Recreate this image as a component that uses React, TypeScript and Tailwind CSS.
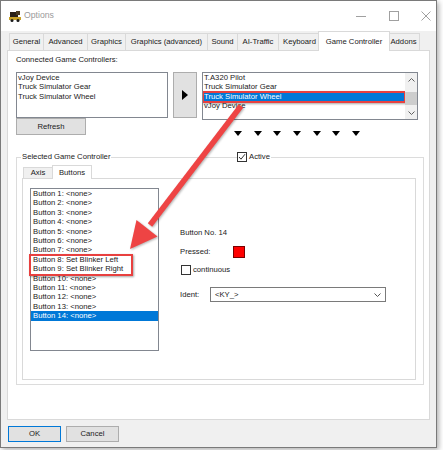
import React from 'react';

// Top level tab strip of the Options window
const topTabs = [
  { label: 'General', cls: 'w-[35px]' },
  { label: 'Advanced', cls: 'w-[45px] -ml-px' },
  { label: 'Graphics', cls: 'w-[39px] -ml-px' },
  { label: 'Graphics (advanced)', cls: 'w-[83px] -ml-px' },
  { label: 'Sound', cls: 'w-[31px] -ml-px' },
  { label: 'AI-Traffic', cls: 'w-[42px] -ml-px' },
  { label: 'Keyboard', cls: 'w-[43px] -ml-px' },
  { label: 'Game Controller', cls: 'w-[72px] -ml-[3px] -mr-[3px]', active: true },
  { label: 'Addons', cls: 'w-[33px]' },
];

const buttonRows = [
  'Button 1: <none>',
  'Button 2: <none>',
  'Button 3: <none>',
  'Button 4: <none>',
  'Button 5: <none>',
  'Button 6: <none>',
  'Button 7: <none>',
];

const buttonRowsAfter = [
  'Button 10: <none>',
  'Button 11: <none>',
  'Button 12: <none>',
  'Button 13: <none>',
];

const ChevronUp = () => (
  <svg width="7" height="4" viewBox="0 0 7 4">
    <path d="M0.5 3.5 L3.5 0.5 L6.5 3.5" fill="none" stroke="#606060" strokeWidth="1" />
  </svg>
);

const ChevronDown = ({ color = '#606060' }: { color?: string }) => (
  <svg width="7" height="4" viewBox="0 0 7 4">
    <path d="M0.5 0.5 L3.5 3.5 L6.5 0.5" fill="none" stroke={color} strokeWidth="1" />
  </svg>
);

const DownTriangle = () => (
  <svg width="8" height="5" viewBox="0 0 8 5">
    <path d="M0 0 H8 L4 5 Z" fill="#000" />
  </svg>
);

const App = () => {
  return (
    <div className="relative w-[443px] h-[450px] bg-white overflow-hidden font-['Liberation_Sans',Arial,sans-serif] text-[7.7px] text-[#1a1a1a]">
      {/* Window */}
      <div className="w-[437px] h-[448px] border border-[#7a7a7a] bg-[#f0f0f0] shadow-[2px_2px_5px_rgba(0,0,0,0.3)] flex flex-col">
        {/* Title bar */}
        <div className="h-[30px] bg-white flex items-center">
          <svg className="ml-[8px]" width="12" height="12" viewBox="0 0 12 12">
            <rect x="1" y="2" width="8" height="5" fill="#2b2118" />
            <rect x="7" y="1" width="4" height="4" fill="#4a3a22" />
            <rect x="0" y="7" width="12" height="3" fill="#c9a227" />
            <circle cx="3" cy="10.5" r="1.5" fill="#1a1a1a" />
            <circle cx="9" cy="10.5" r="1.5" fill="#1a1a1a" />
          </svg>
          <span className="ml-[3px] text-[8.7px] text-[#9a9a9a]">Options</span>
          <div className="ml-auto pr-[5px] flex items-center">
            <svg width="10" height="10" viewBox="0 0 10 10">
              <path d="M0 5.5 H10" stroke="#a0a0a0" strokeWidth="1" />
            </svg>
            <svg className="ml-[23px]" width="10" height="10" viewBox="0 0 10 10">
              <rect x="0.5" y="0.5" width="9" height="9" fill="none" stroke="#a0a0a0" strokeWidth="1" />
            </svg>
            <svg className="ml-[22px]" width="10" height="10" viewBox="0 0 10 10">
              <path d="M0.5 0.5 L9.5 9.5 M9.5 0.5 L0.5 9.5" stroke="#a0a0a0" strokeWidth="1" />
            </svg>
          </div>
        </div>

        {/* Tab strip */}
        <div className="flex items-end pl-[8px] h-[19px]">
          {topTabs.map((t) =>
            t.active ? (
              <div
                key={t.label}
                className={`${t.cls} h-[20px] -mb-px relative z-10 bg-white border border-b-0 border-[#d9d9d9] flex items-center justify-center leading-none`}
              >
                {t.label}
              </div>
            ) : (
              <div
                key={t.label}
                className={`${t.cls} h-[17px] bg-[#f0f0f0] border border-b-0 border-[#d9d9d9] flex items-center justify-center leading-none`}
              >
                {t.label}
              </div>
            )
          )}
        </div>

        {/* Tab page */}
        <div className="ml-[6px] w-[423px] h-[370px] border border-[#d9d9d9] bg-white">
          <div className="pl-[8px] pt-[4px] leading-[10px]">Connected Game Controllers:</div>

          <div className="flex mt-[7px] pl-[8px]">
            {/* Left list + refresh */}
            <div className="flex flex-col">
              <div className="w-[152px] h-[46px] border border-[#828790] bg-white pl-[1px] leading-[9.4px]">
                <div>vJoy Device</div>
                <div>Truck Simulator Gear</div>
                <div>Truck Simulator Wheel</div>
              </div>
              <div className="w-[70px] h-[17px] border border-[#adadad] bg-[#e1e1e1] flex items-center justify-center">
                Refresh
              </div>
            </div>

            {/* Add button */}
            <div className="ml-[5px] w-[24px] h-[46px] border border-[#adadad] bg-[#e1e1e1] flex items-center justify-center">
              <svg width="6" height="10" viewBox="0 0 6 10">
                <path d="M0 0 L6 5 L0 10 Z" fill="#000" />
              </svg>
            </div>

            {/* Right list */}
            <div className="ml-[5px] flex flex-col">
              <div className="w-[216px] h-[48px] border border-[#828790] bg-white flex">
                <div className="flex-1 leading-[9.4px] overflow-hidden">
                  <div className="pl-[1px]">T.A320 Pilot</div>
                  <div className="pl-[1px]">Truck Simulator Gear</div>
                  <div className="relative">
                    <div className="pl-[1px] bg-[#0078d7] text-white">Truck Simulator Wheel</div>
                    <span className="absolute -left-px -right-px -top-px -bottom-[2px] border-2 border-[#e8403f] shadow-[1px_1px_2px_rgba(0,0,0,0.35)]" />
                  </div>
                  <div className="pl-[1px]">vJoy Device</div>
                </div>
                <div className="w-[12px] bg-[#f0f0f0] flex flex-col">
                  <div className="h-[13px] flex items-center justify-center">
                    <ChevronUp />
                  </div>
                  <div className="flex-1">
                    <div className="mt-[6px] h-[13px] bg-[#cdcdcd]" />
                  </div>
                  <div className="h-[13px] flex items-center justify-center">
                    <ChevronDown />
                  </div>
                </div>
              </div>
              <div className="mt-[11px] pl-[32px] flex gap-[11.7px]">
                {[0, 1, 2, 3, 4, 5, 6].map((i) => (
                  <DownTriangle key={i} />
                ))}
              </div>
            </div>
          </div>

          {/* Selected Game Controller group */}
          <div className="relative mt-[21px] ml-[8px] w-[408px] h-[228px] border border-[#dcdcdc] pt-[7px] pl-[5px]">
            <span className="absolute left-[4px] -top-[6px] bg-white px-[1px] leading-[10px]">Selected Game Controller</span>
            <span className="absolute left-[220px] -top-[6px] bg-white flex items-center leading-[10px] pr-[1px]">
              <span className="w-[10px] h-[10px] border border-[#333] bg-white flex items-center justify-center">
                <svg width="8" height="8" viewBox="0 0 8 8">
                  <path d="M1 4 L3 6.2 L7 1.2" fill="none" stroke="#333" strokeWidth="1" />
                </svg>
              </span>
              <span className="ml-[2px]">Active</span>
            </span>

            <div className="flex items-end pl-[1px] h-[13px]">
              <div className="w-[30px] h-[11px] bg-[#f0f0f0] border border-b-0 border-[#d9d9d9] flex items-center justify-center leading-none">
                Axis
              </div>
              <div className="w-[40px] h-[14px] -ml-px -mb-px relative z-10 bg-white border border-b-0 border-[#d9d9d9] flex items-center justify-center leading-none">
                Buttons
              </div>
            </div>

            <div className="w-[394px] h-[202px] border border-[#d9d9d9] bg-white flex">
              {/* Buttons list */}
              <div className="ml-[7px] mt-[9px] w-[129px] h-[163px] border border-[#828790] bg-white leading-[9.4px]">
                {buttonRows.map((r) => (
                  <div key={r} className="pl-[2px]">{r}</div>
                ))}
                <div className="relative">
                  <div className="pl-[2px]">Button 8: Set Blinker Left</div>
                  <div className="pl-[2px]">Button 9: Set Blinker Right</div>
                  <span className="absolute -left-[2px] -top-px w-[104px] -bottom-[2px] border-2 border-[#e8403f] shadow-[1px_1px_2px_rgba(0,0,0,0.35)]" />
                </div>
                {buttonRowsAfter.map((r) => (
                  <div key={r} className="pl-[2px]">{r}</div>
                ))}
                <div className="pl-[2px] bg-[#0078d7] text-white">Button 14: &lt;none&gt;</div>
              </div>

              {/* Button detail */}
              <div className="ml-[21px] mt-[49px] flex flex-col">
                <div className="leading-[10px]">Button No. 14</div>
                <div className="mt-[8px] h-[12px] flex items-center">
                  <span className="w-[53px]">Pressed:</span>
                  <span className="w-[12px] h-[12px] bg-[#ff0000] border border-[#7a0000]" />
                </div>
                <div className="mt-[7px] flex items-center">
                  <span className="ml-px w-[10px] h-[10px] border border-[#333] bg-white" />
                  <span className="ml-[2px] leading-[10px]">continuous</span>
                </div>
                <div className="mt-[12px] h-[15px] flex items-center">
                  <span className="w-[30px]">Ident:</span>
                  <div className="w-[176px] h-[15px] border border-[#7a7a7a] bg-white flex items-center pl-[4px] pr-[4px]">
                    <span>&lt;KY_&gt;</span>
                    <span className="ml-auto">
                      <ChevronDown color="#555" />
                    </span>
                  </div>
                </div>
              </div>
            </div>
          </div>
        </div>

        {/* Dialog buttons */}
        <div className="flex mt-[6px] ml-[7px]">
          <div className="w-[53px] h-[16px] border border-[#0078d7] bg-[#e1e1e1] flex items-center justify-center">OK</div>
          <div className="ml-[5px] w-[53px] h-[16px] border border-[#adadad] bg-[#e1e1e1] flex items-center justify-center">Cancel</div>
        </div>
      </div>

      {/* Red annotation arrow */}
      <svg
        className="absolute left-0 top-0 pointer-events-none drop-shadow-[1px_1px_1px_rgba(0,0,0,0.3)]"
        width="443"
        height="450"
        viewBox="0 0 443 450"
      >
        <line x1="241" y1="106" x2="150" y2="225" stroke="#ee4444" strokeWidth="5.5" />
        <polygon points="130,249 157.5,236.5 136.5,220" fill="#ee4444" />
      </svg>
    </div>
  );
};

export default App;
